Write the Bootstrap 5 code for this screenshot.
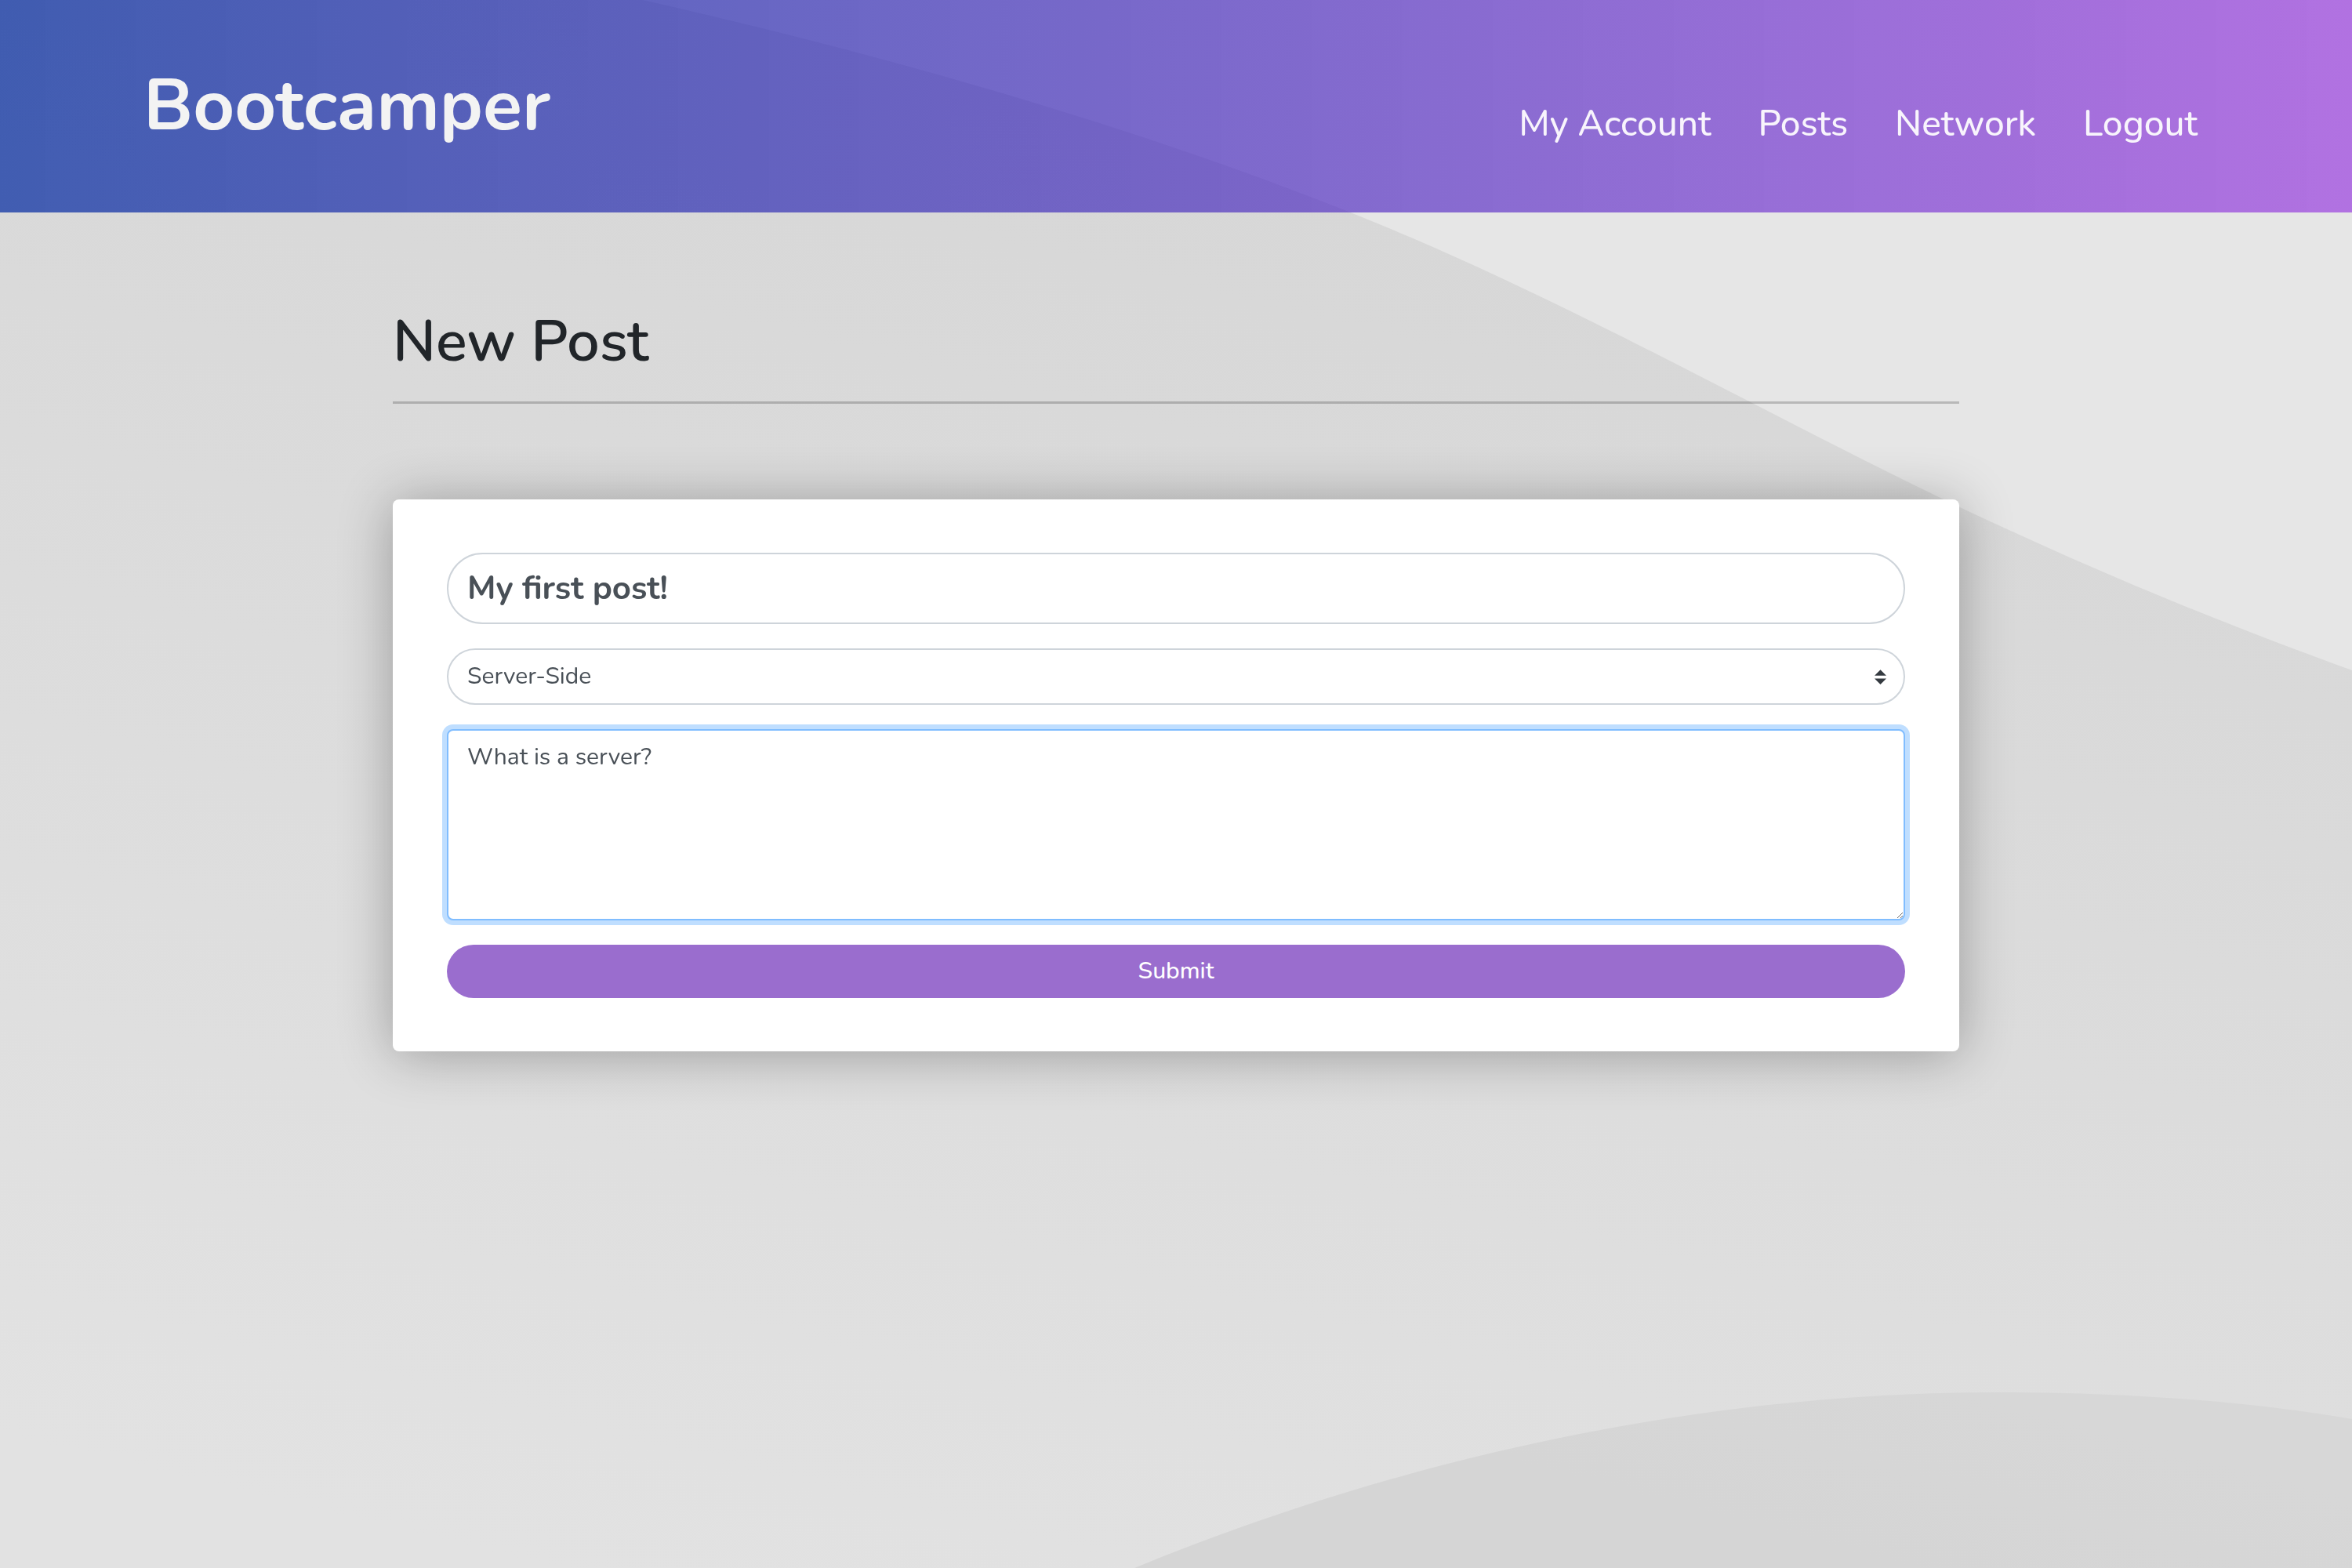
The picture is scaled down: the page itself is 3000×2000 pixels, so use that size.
<!DOCTYPE html>
<html lang="en">
<head>
<meta charset="utf-8">
<meta name="viewport" content="width=device-width, initial-scale=1">
<title>Bootcamper - New Post</title>
<link href="https://cdn.jsdelivr.net/npm/bootstrap@5.3.0/dist/css/bootstrap.min.css" rel="stylesheet">
<style>
  body { font-family: Nunito, Lato, sans-serif; font-size: 30px; color: #212529; background: #dcdcdc; min-height: 100vh; }
  .backdrop { position: fixed; inset: 0; width: 100%; height: 100%; z-index: -1; }
  .site-header { min-height: 271px; padding: 0 197px 2px 183px; background: linear-gradient(90deg, rgba(0, 40, 160, .7), rgba(142, 36, 222, .6)); }
  .site-title { font-size: 92px; font-weight: 700; line-height: 116px; color: #f3f3f3; }
  .site-title:hover { color: #fff; }
  .site-nav { gap: 60px; padding-top: 46px; }
  .site-nav .nav-link { font-size: 46px; font-weight: 500; line-height: 60px; padding: 0; color: #f8f4fc; }
  .post-page { width: 100%; max-width: 1998px; padding-top: 119px; }
  .page-heading { font-size: 74px; font-weight: 600; line-height: 92px; margin: 0; }
  .page-rule { height: 3px; border: 0; background: #000; opacity: .2; margin: 30px 0 122px; }
  .post-card { padding: 68px 69px; border: 0; border-radius: 8px; box-shadow: 0 4px 68px rgba(0, 0, 0, .3); }
  .post-form { gap: 31px; }
  .post-form .form-control, .post-form .form-select { font-size: 30px; line-height: 44px; padding: 12px 24px; border: 2px solid #ced4da; color: #495057; }
  .post-form .post-title { font-size: 42px; font-weight: 700; line-height: 63px; }
  .post-form .form-select { background-image: url("data:image/svg+xml,%3csvg xmlns='http://www.w3.org/2000/svg' viewBox='0 0 4 5'%3e%3cpath fill='%23343a40' d='M2 0L0 2h4zm0 5L0 3h4z'/%3e%3c/svg%3e"); background-size: 15px 19px; background-position: right 22px center; }
  .post-form .post-body { height: 244px; border-color: #80bdff; border-radius: 8px; box-shadow: 0 0 0 6px #bfdeff; }
  .post-form .btn-post { font-size: 30px; font-weight: 500; line-height: 44px; padding: 12px 24px; border: 0; color: #fff; background: #9a6dce; }
</style>
</head>
<body>
<svg class="backdrop" viewBox="0 0 3000 2000" preserveAspectRatio="xMidYMin slice" aria-hidden="true">
  <defs>
    <linearGradient id="slope" gradientUnits="userSpaceOnUse" x1="1900" y1="280" x2="1441" y2="2177">
      <stop offset="0" stop-color="#d7d7d7"/><stop offset="1" stop-color="#e2e2e2"/>
    </linearGradient>
    <linearGradient id="hill" gradientUnits="userSpaceOnUse" x1="2500" y1="1776" x2="2440" y2="2000">
      <stop offset="0" stop-color="#d7d7d7"/><stop offset="1" stop-color="#d5d5d5"/>
    </linearGradient>
  </defs>
  <rect width="3000" height="2000" fill="#e6e6e6"/>
  <path fill="url(#slope)" d="M0 0H820C1150 75 1500 175 1800 303C1950 367 2120 455 2235 514C2350 573 2480 640 2600 693C2730 752 2870 808 3000 855V2000H0Z"/>
  <path fill="url(#hill)" d="M1447 2000C1800 1855 2180 1776 2547 1776C2720 1776 2870 1788 3000 1810V2000Z"/>
</svg>

<header class="site-header d-flex flex-wrap justify-content-between align-items-center">
  <a class="site-title text-decoration-none" href="#">Bootcamper</a>
  <nav aria-label="Main">
    <ul class="site-nav nav">
      <li class="nav-item"><a class="nav-link" href="#">My Account</a></li>
      <li class="nav-item"><a class="nav-link" href="#">Posts</a></li>
      <li class="nav-item"><a class="nav-link" href="#">Network</a></li>
      <li class="nav-item"><a class="nav-link" href="#">Logout</a></li>
    </ul>
  </nav>
</header>

<main class="post-page mx-auto">
  <h1 class="page-heading">New Post</h1>
  <hr class="page-rule">
  <section class="post-card card">
    <form class="post-form d-flex flex-column">
      <input class="post-title form-control rounded-pill" type="text" aria-label="Title" value="My first post!">
      <select class="form-select rounded-pill" aria-label="Category"><option>Server-Side</option></select>
      <textarea class="post-body form-control" aria-label="Body">What is a server?</textarea>
      <button class="btn-post btn rounded-pill w-100" type="submit">Submit</button>
    </form>
  </section>
</main>
<script src="https://cdn.jsdelivr.net/npm/bootstrap@5.3.0/dist/js/bootstrap.bundle.min.js"></script>
</body>
</html>
